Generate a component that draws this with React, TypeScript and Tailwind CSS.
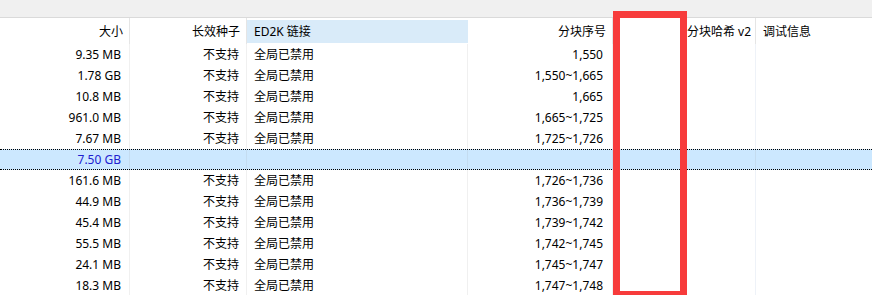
import React from "react";

const rows: [string, string, string, string][] = [
  ["9.35 MB", "不支持", "全局已禁用", "1,550"],
  ["1.78 GB", "不支持", "全局已禁用", "1,550~1,665"],
  ["10.8 MB", "不支持", "全局已禁用", "1,665"],
  ["961.0 MB", "不支持", "全局已禁用", "1,665~1,725"],
  ["7.67 MB", "不支持", "全局已禁用", "1,725~1,726"],
  ["7.50 GB", "", "", ""],
  ["161.6 MB", "不支持", "全局已禁用", "1,726~1,736"],
  ["44.9 MB", "不支持", "全局已禁用", "1,736~1,739"],
  ["45.4 MB", "不支持", "全局已禁用", "1,739~1,742"],
  ["55.5 MB", "不支持", "全局已禁用", "1,742~1,745"],
  ["24.1 MB", "不支持", "全局已禁用", "1,745~1,747"],
  ["18.3 MB", "不支持", "全局已禁用", "1,747~1,748"],
];

export default function App() {
  return (
    <div
      className="relative w-[872px] h-[295px] overflow-hidden bg-white text-[12px] text-black"
      style={{ fontFamily: '"Segoe UI", "Noto Sans", "Noto Sans CJK SC", sans-serif' }}
    >
      <div className="h-[18px] bg-[#f0f0f0] border-b border-[#dadada]" />
      {/* header */}
      <div className="flex h-[26px] leading-[23px]">
        <div className="w-[130px] shrink-0 border-r border-[#e5e5e5] pt-[2px] pr-[6px] text-right">大小</div>
        <div className="w-[117px] shrink-0 border-r border-[#e5e5e5] pt-[2px] pr-[6px] text-right">长效种子</div>
        <div className="w-[221px] shrink-0 mt-[2px] mb-px bg-[#d9ebf9] pl-[7px]">ED2K 链接</div>
        <div className="w-[145px] shrink-0 border-r border-[#e5e5e5] pt-[2px] pr-[6px] text-right">分块序号</div>
        <div className="w-[70px] shrink-0 border-r border-[#e5e5e5] pt-[2px]" />
        <div className="w-[73px] shrink-0 border-r border-[#e5e5e5] pt-[2px] pl-[4px] whitespace-nowrap">分块哈希 v2</div>
        <div className="flex-1 pt-[2px] pl-[7px]">调试信息</div>
      </div>
      {/* body */}
      {rows.map((r, i) => {
        const sel = i === 5;
        return (
          <div
            key={i}
            className={
              sel
                ? "flex h-[21px] leading-[19px] bg-[#cce8ff] border-y border-dotted border-black text-[#2020d0]"
                : "flex h-[21px] leading-[21px]"
            }
          >
            <div className={`w-[130px] shrink-0 border-r pr-[8px] text-right ${sel ? "border-[#c4dcf0]" : "border-[#f0f0f0]"}`}>{r[0]}</div>
            <div className={`w-[117px] shrink-0 border-r pr-[7px] text-right ${sel ? "border-[#c4dcf0]" : "border-[#f0f0f0]"}`}>{r[1]}</div>
            <div className={`w-[221px] shrink-0 border-r pl-[7px] ${sel ? "border-[#c4dcf0]" : "border-[#f0f0f0]"}`}>{r[2]}</div>
            <div className={`w-[145px] shrink-0 border-r pr-[9px] text-right ${sel ? "border-[#c4dcf0]" : "border-[#f0f0f0]"}`}>{r[3]}</div>
            <div className={`w-[70px] shrink-0 border-r ${sel ? "border-[#c4dcf0]" : "border-[#f0f0f0]"}`} />
            <div className={`w-[73px] shrink-0 border-r ${sel ? "border-[#c4dcf0]" : "border-[#eef2f8]"}`} />
            <div className="flex-1" />
          </div>
        );
      })}
      {/* red annotation box */}
      <div className="absolute left-[613px] top-[11px] w-[74px] h-[287px] border-[7px] border-[#f73b3b]" />
    </div>
  );
}
